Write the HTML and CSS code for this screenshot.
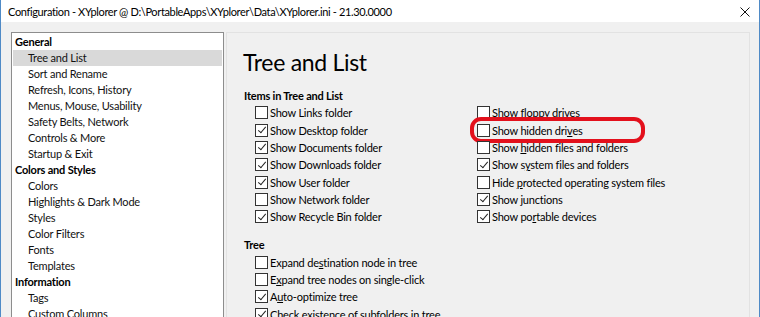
FILE: index.html
```html
<!DOCTYPE html>
<html>
<head>
<meta charset="utf-8">
<link rel="stylesheet" href="styles.css">
</head>
<body>
<div class="window">
  <div class="titlebar">
    <span class="title">Configuration - XYplorer @ D:\PortableApps\XYplorer\Data\XYplorer.ini - 21.30.0000</span>
    <svg class="close" width="10" height="10" viewBox="0 0 10 10"><path d="M0.5 0.5 L9.5 9.5 M9.5 0.5 L0.5 9.5" stroke="#111" stroke-width="1" fill="none"/></svg>
  </div>
  <div class="content">
    <div class="nav">
      <div class="nav-group">General</div>
      <div class="nav-item selected">Tree and List</div>
      <div class="nav-item">Sort and Rename</div>
      <div class="nav-item">Refresh, Icons, History</div>
      <div class="nav-item">Menus, Mouse, Usability</div>
      <div class="nav-item">Safety Belts, Network</div>
      <div class="nav-item">Controls &amp; More</div>
      <div class="nav-item">Startup &amp; Exit</div>
      <div class="nav-group">Colors and Styles</div>
      <div class="nav-item">Colors</div>
      <div class="nav-item">Highlights &amp; Dark Mode</div>
      <div class="nav-item">Styles</div>
      <div class="nav-item">Color Filters</div>
      <div class="nav-item">Fonts</div>
      <div class="nav-item">Templates</div>
      <div class="nav-group">Information</div>
      <div class="nav-item">Tags</div>
      <div class="nav-item">Custom Columns</div>
    </div>
    <div class="panel">
      <h1 class="heading">Tree and List</h1>
      <div class="section-title">Items in Tree and List</div>
      <div class="grid">
        <div class="col">
          <div class="cb"><span class="box"></span><span class="lbl">Show Links folder</span></div>
          <div class="cb"><span class="box checked"></span><span class="lbl">Show Desktop folder</span></div>
          <div class="cb"><span class="box checked"></span><span class="lbl">Show Documents folder</span></div>
          <div class="cb"><span class="box checked"></span><span class="lbl">Show Downloads folder</span></div>
          <div class="cb"><span class="box checked"></span><span class="lbl">Show User folder</span></div>
          <div class="cb"><span class="box"></span><span class="lbl">Show Network folder</span></div>
          <div class="cb"><span class="box checked"></span><span class="lbl">Show Recycle Bin folder</span></div>
        </div>
        <div class="col">
          <div class="cb"><span class="box"></span><span class="lbl">Show floppy drives</span></div>
          <div class="cb"><span class="box"></span><span class="lbl">Show hidden dri<u>v</u>es</span><span class="annotation"></span></div>
          <div class="cb"><span class="box"></span><span class="lbl">Show <u>h</u>idden files and folders</span></div>
          <div class="cb"><span class="box checked"></span><span class="lbl">Show s<u>y</u>stem files and folders</span></div>
          <div class="cb"><span class="box"></span><span class="lbl">Hide <u>p</u>rotected operating system files</span></div>
          <div class="cb"><span class="box checked"></span><span class="lbl">Show <u>j</u>unctions</span></div>
          <div class="cb"><span class="box checked"></span><span class="lbl">Show po<u>r</u>table devices</span></div>
        </div>
      </div>
      <div class="section-title tree-title">Tree</div>
      <div class="col">
        <div class="cb"><span class="box"></span><span class="lbl">Expand de<u>s</u>tination node in tree</span></div>
        <div class="cb"><span class="box"></span><span class="lbl">E<u>x</u>pand tree nodes on single-click</span></div>
        <div class="cb"><span class="box checked"></span><span class="lbl">A<u>u</u>to-optimize tree</span></div>
        <div class="cb"><span class="box checked"></span><span class="lbl">Check existence of subfolders in tree</span></div>
      </div>
    </div>
  </div>
</div>
</body>
</html>
```
FILE: styles.css
```css
html, body {
  margin: 0;
  padding: 0;
}
body {
  width: 760px;
  height: 317px;
  overflow: hidden;
  font-family: Lato, "Noto Sans", sans-serif;
  font-size: 11px;
  letter-spacing: -0.2px;
  color: #000;
}
.window {
  box-sizing: border-box;
  width: 760px;
  height: 317px;
  border-left: 1px solid #4f8ac6;
  border-right: 1px solid #4f8ac6;
  background: #f0f0f0;
  display: flex;
  flex-direction: column;
  overflow: hidden;
}
.titlebar {
  height: 22px;
  flex: none;
  background: #fff;
  display: flex;
  align-items: center;
  justify-content: space-between;
  padding: 0 9px 0 7px;
}
.title {
  font-size: 11px;
  letter-spacing: -0.36px;
  color: #000;
  white-space: nowrap;
}
.close {
  margin-top: 1px;
}
.content {
  flex: 1;
  display: flex;
  padding: 10px 9px 0 10px;
  min-height: 0;
}
.nav {
  width: 209px;
  flex: none;
  background: #fff;
  border: 1px solid #8d8d8d;
  border-bottom: none;
  padding: 1px 1px 0 1px;
  height: 300px;
}
.nav-group, .nav-item {
  height: 16px;
  line-height: 16px;
  white-space: nowrap;
}
.nav-group {
  font-weight: bold;
  padding-left: 2px;
}
.nav-item {
  padding-left: 15px;
  color: #111;
}
.nav-item.selected {
  background: #d9d9d9;
}
.panel {
  flex: 1;
  margin-left: 2px;
  border: 1px solid #e2e2e2;
  border-bottom: none;
  padding: 13px 0 0 17px;
  height: 300px;
}
.heading {
  margin: 0 0 0 -1px;
  font-weight: normal;
  font-size: 23px;
  letter-spacing: -0.3px;
  line-height: 32px;
  height: 32px;
  color: #000;
}
.section-title {
  margin-top: 9px;
  font-weight: bold;
  line-height: 17px;
  height: 17px;
}
.tree-title {
  margin-top: 11px;
}
.grid {
  display: grid;
  grid-template-columns: 222px 1fr;
}
.cb {
  position: relative;
  display: flex;
  align-items: center;
  height: 17.35px;
  padding-left: 11px;
  white-space: nowrap;
}
.lbl {
  white-space: pre;
  margin-left: 1px;
}
.box {
  box-sizing: border-box;
  width: 13px;
  height: 13px;
  border: 1px solid #333;
  background: #fff;
  margin-right: 1px;
  flex: none;
  position: relative;
}
.box.checked::after {
  content: "";
  position: absolute;
  left: 3.5px;
  top: 0.5px;
  width: 3px;
  height: 7px;
  border-right: 1px solid #222;
  border-bottom: 1px solid #222;
  transform: rotate(40deg);
}
u {
  text-decoration-thickness: 1px;
}
.annotation {
  position: absolute;
  left: 4px;
  top: -4px;
  width: 175px;
  height: 26px;
  box-sizing: border-box;
  border: 4.5px solid #e3101c;
  border-radius: 11px;
}
```
